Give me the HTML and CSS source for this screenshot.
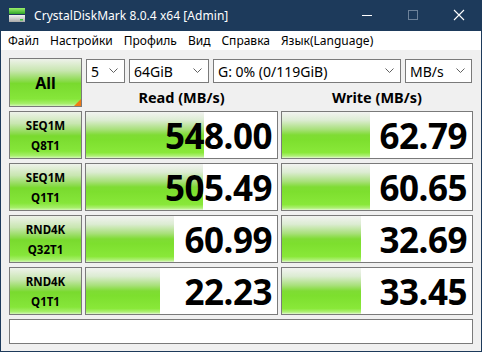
FILE: index.html
```html
<!DOCTYPE html>
<html>
<head>
<meta charset="utf-8">
<link rel="stylesheet" href="styles.css">
</head>
<body>
<div class="window">
  <div class="titlebar">
    <svg class="app-icon" width="18" height="16" viewBox="0 0 18 16">
      <defs>
        <linearGradient id="gtop" x1="0" y1="0" x2="0" y2="1">
          <stop offset="0" stop-color="#9af06a"/>
          <stop offset="1" stop-color="#2fa52a"/>
        </linearGradient>
        <linearGradient id="gbot" x1="0" y1="0" x2="0" y2="1">
          <stop offset="0" stop-color="#f2f2f2"/>
          <stop offset="1" stop-color="#a9a9a9"/>
        </linearGradient>
      </defs>
      <rect x="1" y="1" width="16" height="6" fill="url(#gtop)"/>
      <rect x="1" y="8" width="16" height="7" fill="url(#gbot)"/>
      <rect x="12" y="12" width="3" height="1.5" fill="#3c3"/>
    </svg>
    <span class="title">CrystalDiskMark 8.0.4 x64 [Admin]</span>
    <div class="controls">
      <svg width="46" height="30" viewBox="0 0 46 30"><line x1="18" y1="15.5" x2="28" y2="15.5" stroke="#fff" stroke-width="1"/></svg>
      <svg width="46" height="30" viewBox="0 0 46 30"><rect x="18.5" y="10.5" width="9" height="9" fill="none" stroke="#6d829a" stroke-width="1"/></svg>
      <svg width="46" height="30" viewBox="0 0 46 30"><path d="M18 10 L28 20 M28 10 L18 20" stroke="#fff" stroke-width="1.1"/></svg>
    </div>
  </div>
  <div class="menubar">
    <span>Файл</span><span>Настройки</span><span>Профиль</span><span>Вид</span><span>Справка</span><span>Язык(Language)</span>
  </div>
  <div class="content">
    <div class="grid">
      <div class="btn all">All<span class="corner"></span></div>
      <div class="header">
        <div class="selects">
          <div class="select s1"><span>5</span><svg width="9" height="6" viewBox="0 0 9 6"><path d="M0.5 0.5 L4.5 4.5 L8.5 0.5" fill="none" stroke="#606060"/></svg></div>
          <div class="select s2"><span>64GiB</span><svg width="9" height="6" viewBox="0 0 9 6"><path d="M0.5 0.5 L4.5 4.5 L8.5 0.5" fill="none" stroke="#606060"/></svg></div>
          <div class="select s3"><span>G: 0% (0/119GiB)</span><svg width="9" height="6" viewBox="0 0 9 6"><path d="M0.5 0.5 L4.5 4.5 L8.5 0.5" fill="none" stroke="#606060"/></svg></div>
          <div class="select s4"><span>MB/s</span><svg width="9" height="6" viewBox="0 0 9 6"><path d="M0.5 0.5 L4.5 4.5 L8.5 0.5" fill="none" stroke="#606060"/></svg></div>
        </div>
        <div class="heads">
          <div class="head">Read (MB/s)</div>
          <div class="head">Write (MB/s)</div>
        </div>
      </div>

      <div class="btn label">SEQ1M<br>Q8T1</div>
      <div class="cell"><div class="bar" style="width:118px"></div><span class="num">548.00</span></div>
      <div class="cell"><div class="bar" style="width:88px"></div><span class="num">62.79</span></div>

      <div class="btn label">SEQ1M<br>Q1T1</div>
      <div class="cell"><div class="bar" style="width:117px"></div><span class="num">505.49</span></div>
      <div class="cell"><div class="bar" style="width:88px"></div><span class="num">60.65</span></div>

      <div class="btn label">RND4K<br>Q32T1</div>
      <div class="cell"><div class="bar" style="width:88px"></div><span class="num">60.99</span></div>
      <div class="cell"><div class="bar" style="width:79px"></div><span class="num">32.69</span></div>

      <div class="btn label">RND4K<br>Q1T1</div>
      <div class="cell"><div class="bar" style="width:74px"></div><span class="num">22.23</span></div>
      <div class="cell"><div class="bar" style="width:79px"></div><span class="num">33.45</span></div>

      <div class="comment"></div>
    </div>
  </div>
</div>
</body>
</html>
```

FILE: styles.css
```css
html, body {
  margin: 0;
  padding: 0;
  width: 482px;
  height: 352px;
  overflow: hidden;
  font-family: "Noto Sans", "Open Sans", "DejaVu Sans", sans-serif;
}
.window {
  width: 482px;
  height: 352px;
  box-sizing: border-box;
  background: #1d3a5b;
  padding: 0 1px 1px 1px;
  display: flex;
  flex-direction: column;
}
.titlebar {
  height: 31px;
  display: flex;
  align-items: center;
  color: #fff;
  flex: none;
}
.app-icon {
  margin-left: 7px;
  margin-top: -1px;
}
.title {
  margin-left: 8px;
  font-size: 12px;
  letter-spacing: 0.05px;
  margin-top: -1px;
}
.controls {
  margin-left: auto;
  display: flex;
  margin-top: -1px;
  margin-right: -1px;
}
.controls svg { display: block; }
.menubar {
  height: 19px;
  background: #fff;
  display: flex;
  align-items: center;
  font-size: 12px;
  color: #000;
  padding-left: 7px;
  gap: 11px;
  flex: none;
  border-bottom: 1px solid #f0f0f0;
}
.content {
  flex: 1;
  background: #f0f0f0;
  padding: 7px 7px 7px 8px;
}
.grid {
  display: grid;
  grid-template-columns: 73px 193px 192px;
  grid-template-rows: 49px 48px 48px 48px 48px 25px;
  column-gap: 3px;
  row-gap: 4px;
}
.btn {
  box-sizing: border-box;
  border: 1px solid #7a7a7a;
  background: linear-gradient(to bottom, #eef2ea 0%, #c8e6b0 25%, #86da45 48%, #79da2e 52%, #86e63a 85%, #a6ef6a 95%, #d3f6b8 100%);
  display: flex;
  align-items: center;
  justify-content: center;
  text-align: center;
  font-weight: bold;
  color: #000;
  position: relative;
}
.all {
  font-size: 16px;
}
.corner {
  position: absolute;
  right: 0;
  bottom: 0;
  width: 0;
  height: 0;
  border-style: solid;
  border-width: 0 0 7px 7px;
  border-color: transparent transparent #f07a14 transparent;
}
.label {
  font-size: 11.5px;
  line-height: 20px;
  padding-top: 1px;
}
.header {
  grid-column: 2 / span 2;
  display: flex;
  flex-direction: column;
}
.selects {
  display: flex;
  gap: 4px;
  margin-top: 1px;
  margin-left: 1px;
  height: 24px;
}
.select {
  box-sizing: border-box;
  height: 24px;
  border: 1px solid #7a7a7a;
  background: #fff;
  display: flex;
  align-items: center;
  padding: 0 6px 0 4px;
  font-size: 14px;
  color: #000;
}
.select span { flex: 1; white-space: nowrap; }
.select svg { display: block; }
.s1 { width: 39px; }
.s2 { width: 80px; }
.s3 { width: 188px; }
.s4 { width: 67px; }
.heads {
  display: grid;
  grid-template-columns: 193px 192px;
  column-gap: 3px;
  margin-top: 5px;
}
.head {
  text-align: center;
  font-weight: bold;
  font-size: 14.5px;
  line-height: 18px;
  color: #000;
}
.cell {
  box-sizing: border-box;
  border: 1px solid #7a7a7a;
  background: #fff;
  position: relative;
  display: flex;
  align-items: center;
  justify-content: flex-end;
  padding-right: 5px;
}
.bar {
  position: absolute;
  left: 0;
  top: 0;
  bottom: 0;
  background: linear-gradient(to bottom, #f2f3f1 0%, #dcecd2 18%, #a8e07a 38%, #7fdc34 50%, #7ddf2e 60%, #89e839 88%, #b0f078 96%, #e4f8d4 100%);
}
.num {
  position: relative;
  font-weight: bold;
  font-size: 35px;
  letter-spacing: -0.5px;
  line-height: 1;
  color: #000;
}
.comment {
  grid-column: 1 / span 3;
  box-sizing: border-box;
  border: 1px solid #7a7a7a;
  background: #fff;
}
```
